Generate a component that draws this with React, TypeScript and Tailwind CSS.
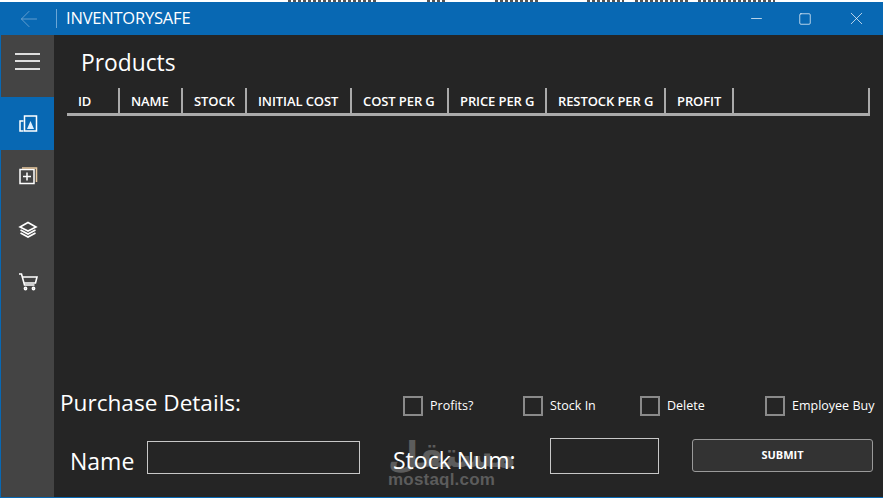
import { ArrowLeft, Minus, Square, X } from "lucide-react";

const font = "font-['Open_Sans','Noto_Sans',sans-serif]";

const columns = [
  { name: "ID", w: "w-[53px]" },
  { name: "NAME", w: "w-[63px]" },
  { name: "STOCK", w: "w-[64px]" },
  { name: "INITIAL COST", w: "w-[105px]" },
  { name: "COST PER G", w: "w-[97px]" },
  { name: "PRICE PER G", w: "w-[98px]" },
  { name: "RESTOCK PER G", w: "w-[119px]" },
  { name: "PROFIT", w: "w-[68px]" },
];

const checks = [
  { label: "Profits?", w: "w-[120px]" },
  { label: "Stock In", w: "w-[117px]" },
  { label: "Delete", w: "w-[125px]" },
  { label: "Employee Buy", w: "w-[110px]" },
];

// the cropped bit of whatever sat above the window
const strip = [
  { w: "w-[89px] ml-[288px]" },
  { w: "w-[20px] ml-[50px]" },
  { w: "w-[43px] ml-[48px]" },
  { w: "w-[37px] ml-[49px]" },
  { w: "w-[54px] ml-[11px]" },
  { w: "w-[77px] ml-[9px]" },
];

function ProductsIcon() {
  return (
    <svg width="20" height="20" viewBox="0 0 20 20" fill="none" stroke="white" strokeWidth="1.5">
      <rect x="6.5" y="2" width="12" height="15" />
      <path d="M5.5 7H2v10h3.5" />
      <path d="M9 15l3.5-8 3.5 8z" fill="#dff0ff" stroke="none" />
    </svg>
  );
}

function AddIcon() {
  return (
    <svg width="20" height="20" viewBox="0 0 20 20" fill="none" stroke="white" strokeWidth="1.5">
      <rect x="2" y="3.5" width="14" height="14" />
      <path d="M4 2h14.5v14" stroke="#e8c9a0" />
      <path d="M9 6.5v8M5 10.5h8" />
    </svg>
  );
}

function LayersIcon() {
  return (
    <svg width="20" height="20" viewBox="0 0 20 20" fill="none" stroke="white" strokeWidth="1.6">
      <path d="M10 2.5l8 4.5-8 4-8-4z" />
      <path d="M2.5 10l7.5 4 7.5-4" />
      <path d="M2.5 13l7.5 4 7.5-4" />
    </svg>
  );
}

function CartIcon() {
  return (
    <svg width="20" height="20" viewBox="0 0 20 20" fill="none" stroke="white" strokeWidth="1.6">
      <path d="M1 2h2.5l3 11h10" />
      <path d="M4.5 5H19l-1.5 6H6.2" />
      <circle cx="7.5" cy="16.5" r="1.1" />
      <circle cx="15.5" cy="16.5" r="1.1" />
    </svg>
  );
}

export default function App() {
  return (
    <div className={`w-[885px] h-[499px] overflow-hidden bg-white flex flex-col pb-[1px] pr-[2px] ${font}`}>
      <div className="h-[2px] shrink-0 flex">
        {strip.map((s) => (
          <div
            key={s.w}
            className={`${s.w} h-[2px] bg-[repeating-linear-gradient(90deg,#555555_0_3px,#ffffff_3px_5px)]`}
          />
        ))}
      </div>

      <header className="h-[33px] shrink-0 bg-[#0868b3] flex items-center text-white">
        <div className="w-[56px] flex justify-center pl-[1px]">
          <ArrowLeft size={26} strokeWidth={0.8} className="text-[#6fa5d2]" />
        </div>
        <div className="w-px h-[19px] bg-[#6ba6d6]" />
        <span className="ml-[9px] text-[16.5px] leading-none tracking-[-0.2px]">INVENTORYSAFE</span>
        <div className="ml-auto flex items-center">
          <div className="w-[48px] flex justify-center"><Minus size={17} strokeWidth={1} /></div>
          <div className="w-[50px] flex justify-center"><Square size={14} strokeWidth={1.2} /></div>
          <div className="w-[53px] flex justify-center"><X size={21} strokeWidth={0.8} /></div>
        </div>
      </header>

      <div className="flex-1 flex border-l border-b border-[#0868b3] bg-[#252525] relative min-h-0">
        <nav className="w-[53px] shrink-0 bg-[#444444] flex flex-col">
          <div className="h-[62px] pb-[10px] flex items-center justify-center">
            <div className="w-[25px] flex flex-col gap-[5.5px]">
              <div className="h-[2px] bg-[#dddddd]" />
              <div className="h-[2px] bg-[#dddddd]" />
              <div className="h-[2px] bg-[#dddddd]" />
            </div>
          </div>
          <div className="h-[53px] bg-[#0868b3] flex items-center justify-center"><ProductsIcon /></div>
          <div className="h-[53px] pb-[2px] flex items-center justify-center"><AddIcon /></div>
          <div className="h-[53px] flex items-center justify-center"><LayersIcon /></div>
          <div className="h-[53px] pb-[2px] flex items-center justify-center"><CartIcon /></div>
        </nav>

        <main className="flex-1 flex flex-col text-white min-w-0">
          <h1 className="ml-[27px] mt-[13px] h-[40px] text-[22.8px] leading-[30px]">Products</h1>

          <div className="ml-[13px] w-[803px] h-[28px] flex border-b-[3px] border-r-2 border-[#aaaaaa]">
            {columns.map((c) => (
              <div
                key={c.name}
                className={`${c.w} h-[25px] shrink-0 border-r-2 border-[#aaaaaa] pl-[11px] text-[13px] font-semibold leading-[27px] whitespace-nowrap tracking-[-0.1px]`}
              >
                {c.name}
              </div>
            ))}
          </div>

          <div className="flex-1" />

          <div className="flex items-center h-[28px] mb-[19px]">
            <div className="ml-[6px] w-[343px] mb-[6px] text-[22.6px] leading-none whitespace-nowrap">Purchase Details:</div>
            {checks.map((c) => (
              <label key={c.label} className={`${c.w} flex items-center gap-[7px] shrink-0`}>
                <span className="w-[20px] h-[20px] border-2 border-[#8a8a8a]" />
                <span className="text-[12.5px] leading-none whitespace-nowrap">{c.label}</span>
              </label>
            ))}
          </div>

          <div className="flex items-center h-[36px] mb-[22px] relative">
            <span className="ml-[16px] w-[77px] mt-[8px] text-[23px] leading-none">Name</span>
            <div className="w-[213px] h-[33px] border border-[#c8c8c8]" />
            <span className="ml-[33px] w-[157px] mt-[6px] text-[23px] leading-none whitespace-nowrap relative z-10">Stock Num:</span>
            <div className="w-[109px] h-[36px] mb-[2px] border border-[#c8c8c8]" />
            <button className="ml-[33px] w-[181px] h-[33px] mb-[3px] rounded-[3px] border border-[#9a9a9a] bg-[#333333] text-[11px] font-bold text-white">
              SUBMIT
            </button>
          </div>
        </main>

        <div className="absolute left-[387px] top-[402px] w-[110px] flex flex-col items-start text-[#5c5c5c] leading-none">
          <span className="h-[33px] text-[35px] leading-[36px] font-bold font-['DejaVu_Sans',sans-serif]">مستقل</span>
          <span className="mt-[1px] text-[17px] font-bold font-['Liberation_Sans',sans-serif] tracking-[0.2px] whitespace-nowrap">mostaql.com</span>
        </div>
      </div>
    </div>
  );
}
